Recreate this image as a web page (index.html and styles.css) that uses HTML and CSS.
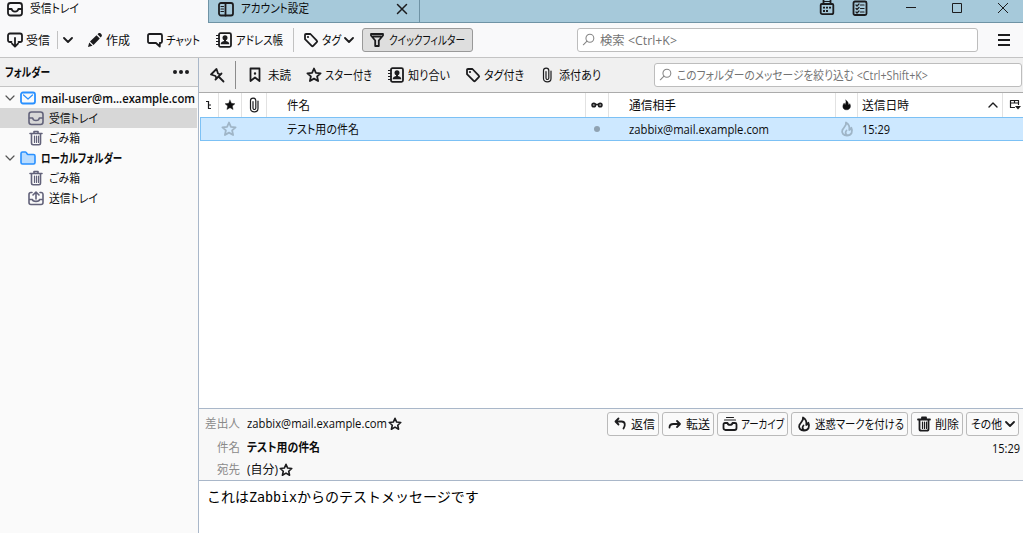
FILE: index.html
```
<!DOCTYPE html>
<html lang="ja">
<head>
  <meta charset="utf-8">
  <title>受信トレイ</title>
  <link rel="stylesheet" href="styles.css">
</head>
<body>
  <!-- shared icons -->
  <svg class="defs">
    <symbol id="inbox" viewBox="0 0 16 16"><rect x="1" y="2" width="14" height="12.5" rx="2.5"/><path d="M1.500 8h3.200c.4 3.400 6.200 3.400 6.600 0h3.200"/></symbol>
    <symbol id="star" viewBox="0 0 16 16"><path d="M8 1.500l1.900 4.300 4.700.5-3.500 3.100 1 4.600L8 11.600 3.900 14l1-4.600-3.500-3.100 4.700-.5z"/></symbol>
    <symbol id="tag" viewBox="0 0 16 16"><path d="M2 2.800v4.400l6.700 6.600c.5.500 1 .5 1.500 0l3.600-3.600c.5-.5.500-1 0-1.500L7.400 2H3c-.6 0-1 .3-1 .8z"/><circle class="solid" cx="5" cy="5" r="1.100"/></symbol>
    <symbol id="trash" viewBox="0 0 16 16"><path d="M2 3.500h12M6 3V1.500h4V3M3.500 4v9c0 1 .6 1.700 1.700 1.700h5.600c1.100 0 1.700-.7 1.700-1.700V4"/><path class="thin" d="M6.500 6v6.500M8.500 6v6.500M10.500 6v6.500"/></symbol>
    <symbol id="book" viewBox="0 0 16 16"><rect x="3" y="1.200" width="12" height="13.600" rx="1.500"/><path class="thin" d="M0 3.500h3M0 6.500h3M0 9.500h3M0 12.500h3"/><circle class="solid" cx="9" cy="5.800" r="2.500"/><path class="solid" d="M4.700 12.300c0-2.300 1.500-2.800 3.300-3.300V8h2v1c1.800.5 3.300 1 3.300 3.300z"/></symbol>
    <symbol id="clip" viewBox="0 0 16 16"><path d="M12 4v7.500c0 4.500-7.500 4.500-7.500 0v-8c0-3.200 5.300-3.200 5.300 0V11c0 2-2.800 2-2.800 0V4.500"/></symbol>
    <symbol id="flame" viewBox="0 0 16 16"><path d="M7 1.500c.8 3-2.200 4.500-3.600 7.500-1.200 3 1 5.500 4.600 5.500 4.500 0 6.300-4 4.300-7.800-.3 1.300-.9 2-2 2.300C10.800 6 9.800 3 7 1.500zM7.500 9.500c-1.300 1.500-1.300 3.300.3 4.500"/></symbol>
    <symbol id="flame-solid" viewBox="0 0 16 16"><path d="M7 1c1 3-.8 4.300-.5 6.300C5 7 4.700 6.300 4.800 5 1 9 2.500 15 8 15s7.200-5.500 4.700-9c-.4 1-1 1.500-1.900 1.600C11 4.500 9.500 2.500 7 1z"/></symbol>
    <symbol id="glass" viewBox="0 0 16 16"><circle cx="9" cy="6" r="4.500"/><path d="M5.700 9.300L1.500 13.500"/></symbol>
    <symbol id="down" viewBox="0 0 10 10"><path d="M1 3l4 4 4-4"/></symbol>
  </svg>

  <div class="tabs">
    <div class="tab active">
      <svg class="icon"><use href="#inbox"/></svg>
      <span class="t" data-w="49">受信トレイ</span>
    </div>
    <div class="tab second">
      <svg class="icon" viewBox="0 0 16 16"><rect x="1" y="2" width="14" height="12.500" rx="2"/><path d="M7.500 2v12.500"/><path class="thin" d="M3 5.500h2.500M3 8h2.500M3 10.500h2.500"/></svg>
      <span class="t" data-w="68">アカウント設定</span>
      <svg class="icon close" viewBox="0 0 16 16"><path d="M3.500 3.500l9 9M12.500 3.500l-9 9"/></svg>
    </div>
    <div class="window-icons">
      <svg class="icon cal" viewBox="0 0 16 16"><path d="M2.700 4h10.600c.7 0 1 .3 1 1v7.500c0 1-.7 1.700-1.700 1.700H3.400c-1 0-1.700-.7-1.700-1.700V5c0-.7.3-1 1-1z"/><path d="M4.500 0v3.500M11.500 0v3.500"/><path class="thin" d="M5 1.500h6"/><path class="dots" d="M4 7.700h8M4 11h5.500"/></svg>
      <svg class="icon tasks" viewBox="0 0 16 16"><rect x="1.500" y="1.500" width="13" height="13.500" rx="1.500"/><path class="thin" d="M4 5l1 1 2-2M4 8.500l1 1 2-2M4 12l1 1 2-2M8.500 5H12M8.500 8.500H12M8.500 12H12"/></svg>
      <svg class="icon win min" viewBox="0 0 16 16"><path d="M3 7.500h10"/></svg>
      <svg class="icon win max" viewBox="0 0 16 16"><path d="M3.500 3.500h9v9h-9z"/></svg>
      <svg class="icon win" viewBox="0 0 16 16"><path d="M3 3l10 10M13 3L3 13"/></svg>
    </div>
  </div>

  <div class="toolbar">
    <div class="tool receive">
      <svg class="icon" viewBox="0 0 16 16"><path d="M4.500 10H3c-1.200 0-2-.7-2-1.800V3.500C1 2.300 1.700 1.500 3 1.500h10c1.300 0 2 .8 2 2v4.700c0 1.100-.8 1.800-2 1.800h-1.500M8 6v8.500M5 11.700l3 3 3-3"/></svg>
      <span class="t" data-w="24">受信</span>
    </div>
    <div class="sep small"></div>
    <svg class="chev wide"><use href="#down"/></svg>
    <div class="tool write">
      <svg class="icon" viewBox="0 0 16 16"><path class="solid" d="M1 15l1.200-4.500 3.300 3.300zM3 9.500l6.500-6.300L12.800 6.500 6.500 13zM10.500 2.300l1-1c1.500-1.200 4.300 1.500 3.200 3l-1 1.200z"/></svg>
      <span class="t" data-w="24">作成</span>
    </div>
    <div class="tool chat">
      <svg class="icon" viewBox="0 0 16 16"><path d="M2.500 2h11c1 0 1.500.5 1.500 1.500v6c0 1-.5 1.500-1.500 1.500h-.7v3.500L9 11H2.500C1.500 11 1 10.500 1 9.500v-6C1 2.500 1.500 2 2.500 2z"/></svg>
      <span class="t" data-w="34">チャット</span>
    </div>
    <div class="tool address">
      <svg class="icon"><use href="#book"/></svg>
      <span class="t" data-w="47">アドレス帳</span>
    </div>
    <div class="sep"></div>
    <div class="tool tags">
      <svg class="icon"><use href="#tag"/></svg>
      <span class="t" data-w="19">タグ</span>
      <svg class="chev"><use href="#down"/></svg>
    </div>
    <div class="tool quick">
      <svg class="icon" viewBox="0 0 16 16"><path d="M2 2h12v1.500L9.800 8.500V14H6.200V8.500L2 3.500zM4 4.500h8"/></svg>
      <span class="t" data-w="76">クイックフィルター</span>
    </div>
    <div class="search">
      <svg class="glass"><use href="#glass"/></svg>
      <span class="t" data-w="77">検索 &lt;Ctrl+K&gt;</span>
    </div>
    <div class="menu"><i></i><i></i><i></i></div>
  </div>

  <div class="main">
    <div class="sidebar">
      <div class="side-head">
        <span class="t" data-w="45">フォルダー</span>
        <div class="more"><i></i><i></i><i></i></div>
      </div>
      <div class="row account">
        <svg class="chev"><use href="#down"/></svg>
        <svg class="icon blue" viewBox="0 0 16 16"><rect x="1" y="2.500" width="14" height="11" rx="2"/><path class="thin" d="M3.500 5L8 9l4.500-4"/></svg>
        <span class="t" data-w="154">mail-user@m...example.com</span>
      </div>
      <div class="row selected">
        <svg class="icon folder"><use href="#inbox"/></svg>
        <span class="t" data-w="49">受信トレイ</span>
      </div>
      <div class="row">
        <svg class="icon folder"><use href="#trash"/></svg>
        <span class="t" data-w="31">ごみ箱</span>
      </div>
      <div class="row account">
        <svg class="chev"><use href="#down"/></svg>
        <svg class="icon blue filled" viewBox="0 0 16 16"><path d="M1 12V3.500C1 2.500 1.500 2 2.500 2h3c1 0 1.500 2.500 2.500 2.500h5.500c1 0 1.500.5 1.500 1.500v6.500c0 1-.5 1.500-1.500 1.500h-11C1.500 14 1 13.500 1 12.500z"/></svg>
        <span class="t" data-w="81">ローカルフォルダー</span>
      </div>
      <div class="row">
        <svg class="icon folder"><use href="#trash"/></svg>
        <span class="t" data-w="31">ごみ箱</span>
      </div>
      <div class="row">
        <svg class="icon folder" viewBox="0 0 16 16"><path d="M4 2.500H3c-1.300 0-2 .7-2 2v8c0 1.300.7 2 2 2h10c1.300 0 2-.7 2-2v-8c0-1.300-.7-2-2-2h-1M1.500 9.500h3c0 2.500 7 2.500 7 0h3M8 9V2.500M5 5l3-3 3 3"/></svg>
        <span class="t" data-w="49">送信トレイ</span>
      </div>
    </div>

    <div class="content">
      <div class="filter">
        <svg class="icon pin" viewBox="0 0 16 16"><path d="M10 10l4.500 4.500M12.500 6.500l-6 6M11.500 7.500L9 6.500 7.500 2 2 7.500 6.500 9l1 2.500"/></svg>
        <div class="sep dark"></div>
        <div class="tool unread">
          <svg class="icon" viewBox="0 0 16 16"><path d="M3.500 1.500h9v12.500L8 10.500 3.500 14z"/><circle class="solid" cx="8" cy="6.500" r="1.200"/></svg>
          <span class="t" data-w="23">未読</span>
        </div>
        <div class="tool starred">
          <svg class="icon"><use href="#star"/></svg>
          <span class="t" data-w="47">スター付き</span>
        </div>
        <div class="tool known">
          <svg class="icon"><use href="#book"/></svg>
          <span class="t" data-w="42">知り合い</span>
        </div>
        <div class="tool tagged">
          <svg class="icon"><use href="#tag"/></svg>
          <span class="t" data-w="40">タグ付き</span>
        </div>
        <div class="tool attached">
          <svg class="icon light"><use href="#clip"/></svg>
          <span class="t" data-w="42">添付あり</span>
        </div>
        <div class="search">
          <svg class="glass"><use href="#glass"/></svg>
          <span class="t" data-w="251">このフォルダーのメッセージを絞り込む &lt;Ctrl+Shift+K&gt;</span>
        </div>
      </div>

      <div class="columns head">
        <div class="cell"><svg class="tiny" viewBox="0 0 10 10"><path d="M1 1.500h2M3.500 1v7.500H6M3.500 5H6"/></svg></div>
        <div class="cell center"><svg class="col-star black"><use href="#star"/></svg></div>
        <div class="cell center"><svg class="icon light"><use href="#clip"/></svg></div>
        <div class="cell subject"><span class="t" data-w="23">件名</span></div>
        <div class="cell center"><svg class="glasses" viewBox="0 0 12 8"><circle cx="2.800" cy="4" r="1.800"/><circle cx="9.200" cy="4" r="1.800"/><path d="M4.500 3.500h3"/></svg></div>
        <div class="cell person"><span class="t" data-w="47">通信相手</span></div>
        <div class="cell center"><svg class="col-flame black"><use href="#flame-solid"/></svg></div>
        <div class="cell date"><span class="t" data-w="47">送信日時</span><svg class="chev up"><use href="#down"/></svg></div>
        <div class="cell picker"><svg viewBox="0 0 12 12"><path d="M5.500 8.500H1.500v-7h8v4M1.500 4h8M5.500 1.500V4"/><path class="solid" d="M6 7h6L9 10.500z"/></svg></div>
      </div>
      <div class="columns message">
        <div class="cell"></div>
        <div class="cell center"><svg class="icon faded"><use href="#star"/></svg></div>
        <div class="cell"></div>
        <div class="cell subject"><span class="t" data-w="72">テスト用の件名</span></div>
        <div class="cell center"><i class="dot"></i></div>
        <div class="cell person"><span class="t" data-w="140">zabbix@mail.example.com</span></div>
        <div class="cell center"><svg class="icon faded"><use href="#flame"/></svg></div>
        <div class="cell date"><span class="t" data-w="28">15:29</span></div>
        <div class="cell"></div>
      </div>
      <div class="empty"></div>

      <div class="msg-head">
        <div class="fields">
          <div class="field from"><span class="name"><span class="t" data-w="35">差出人</span></span><span class="t" data-w="140">zabbix@mail.example.com</span><svg class="mini-star"><use href="#star"/></svg></div>
          <div class="field"><span class="name"><span class="t" data-w="23">件名</span></span><b class="t" data-w="73">テスト用の件名</b></div>
          <div class="field to"><span class="name"><span class="t" data-w="23">宛先</span></span><span class="t" data-w="31">(自分)</span><svg class="mini-star"><use href="#star"/></svg></div>
        </div>
        <div class="side">
          <div class="actions">
            <button class="reply"><svg class="icon" viewBox="0 0 16 16"><path d="M6.500 2.500L3.500 5.500l3 3M4 5.500h5.500c4 0 4 4 2 7"/></svg><span class="t" data-w="24">返信</span></button>
            <button class="forward"><svg class="icon" viewBox="0 0 16 16"><path d="M2.500 11.500c0-2.500 1.500-3.500 4-3.500H13M10 5l3 3-3 3"/></svg><span class="t" data-w="24">転送</span></button>
            <button class="archive"><svg class="icon" viewBox="0 0 16 16"><path class="thin" d="M4.500 1.500h7M2.500 4h11"/><path d="M3 7h2.500c.5 2.500 4.500 2.500 5 0H13c1 0 1.500.5 1.500 1.500V12c0 1.200-.8 2-2 2h-9c-1.200 0-2-.8-2-2V8.500C1.500 7.500 2 7 3 7z"/></svg><span class="t" data-w="43">アーカイブ</span></button>
            <button class="junk"><svg class="icon"><use href="#flame"/></svg><span class="t" data-w="89">迷惑マークを付ける</span></button>
            <button class="delete"><svg class="icon"><use href="#trash"/></svg><span class="t" data-w="24">削除</span></button>
            <button class="other"><span class="t" data-w="31">その他</span><svg class="chev"><use href="#down"/></svg></button>
          </div>
          <div class="time"><span class="t" data-w="28">15:29</span></div>
        </div>
      </div>
      <div class="msg-body">これは<span>Zabbix</span>からのテストメッセージです</div>
    </div>
  </div>

  <script>
    const labels = document.querySelectorAll(".t");

    labels.forEach((label) => {
      const width = Number(label.dataset.w);
      const natural = label.getBoundingClientRect().width;
      label.style.width = `${width}px`;
      label.style.transform = `scaleX(${width / natural})`;
    });
  </script>
</body>
</html>
```
FILE: styles.css
```
* {
  box-sizing: border-box;
}

body {
  margin: 0;
  width: 1023px;
  height: 533px;
  overflow: hidden;
  display: flex;
  flex-direction: column;
  font: 12px/16px "Open Sans", "Noto Sans CJK JP", sans-serif;
  font-feature-settings: "palt";
  color: #0c0c0d;
  background: #fff;
}

.defs {
  display: none;
}

svg {
  flex: none;
  fill: none;
  stroke: #1c1c1e;
  stroke-width: 1.8;
  stroke-linejoin: round;
  stroke-linecap: round;
}

.solid {
  fill: #1c1c1e;
  stroke: none;
}

.thin {
  stroke-width: 1.2;
}

.t {
  display: inline-block;
  flex: none;
  padding-top: 2px;
  white-space: nowrap;
  transform-origin: 0 50%;
}

.icon {
  width: 16px;
  height: 16px;
}

.light {
  stroke-width: 1.2;
}

.chev {
  width: 10px;
  height: 10px;
}

/* tabs */
.tabs {
  height: 23px;
  display: flex;
  background: #a6c9da;
  border-bottom: 1px solid #6f93a5;
}

.tab {
  display: flex;
  height: 22px;
  padding-bottom: 5px;
  align-items: center;
}

.tab .t {
  padding-top: 1px;
}

.tab.active {
  width: 208px;
  height: 23px;
  padding: 0 0 6px 7px;
  gap: 7px;
  background: #f9f9fa;
}

.tab.second {
  width: 212px;
  padding-left: 9px;
  gap: 7px;
  border-left: 1px solid #6f93a5;
  border-right: 1px solid #6f93a5;
}

.close {
  margin-left: 78px;
  stroke-width: 1.5;
}

.window-icons {
  display: flex;
  flex: 1;
  padding-left: 399px;
}

.tasks {
  margin-left: 17px;
}

.dots {
  stroke-dasharray: 2 1;
  stroke-linecap: butt;
}

.win {
  stroke-width: 1;
  stroke-linecap: butt;
  margin-left: 30px;
}

.win.min {
  margin-left: 35px;
}

/* toolbar */
.toolbar {
  height: 35px;
  display: flex;
  align-items: center;
  background: #f9f9fa;
  border-bottom: 1px solid #c4c4c4;
}

.tool {
  display: flex;
  align-items: center;
  gap: 3px;
  flex: none;
}

.receive {
  width: 57px;
  padding-left: 7px;
}

.sep {
  width: 1px;
  height: 24px;
  background: #c2c2c2;
}

.sep.small {
  height: 18px;
}

.chev.wide {
  margin-left: 5px;
}

.write {
  width: 60px;
  margin-left: 14px;
}

.chat {
  width: 69px;
}

.address {
  width: 77px;
  gap: 4px;
}

.tags {
  width: 68px;
  padding-left: 9px;
  gap: 3px;
}

.quick {
  width: 111px;
  height: 24px;
  padding-left: 6px;
  gap: 4px;
  border: 1px solid #999;
  border-radius: 3px;
  background: #dedede;
}

.search {
  display: flex;
  align-items: center;
  width: 401px;
  height: 24px;
  margin-left: 104px;
  padding-left: 4px;
  gap: 4px;
  border: 1px solid #bdbdbd;
  border-radius: 3px;
  background: #fff;
  color: #737373;
}

.glass {
  width: 14px;
  height: 14px;
  stroke: #858585;
  stroke-width: 1.2;
}

.menu {
  display: flex;
  flex-direction: column;
  gap: 3px;
  margin-left: 20px;
}

.menu i {
  width: 12px;
  height: 2px;
  background: #1c1c1e;
}

/* folder pane */
.main {
  flex: 1;
  display: flex;
}

.sidebar {
  width: 199px;
  background: #fafafa;
  border-right: 1px solid #a9b7c9;
}

.side-head {
  display: flex;
  align-items: center;
  justify-content: space-between;
  height: 29px;
  padding: 0 9px 0 5px;
  margin-bottom: 1px;
  background: #f0f0f0;
  border-bottom: 1px solid #c4c4c4;
  font-weight: 600;
}

.more {
  display: flex;
  gap: 2px;
}

.more i {
  width: 4px;
  height: 4px;
  border-radius: 50%;
  background: #1c1c1e;
}

.row {
  display: flex;
  align-items: center;
  gap: 5px;
  width: 197px;
  height: 20px;
  padding-left: 28px;
}

.account {
  padding-left: 5px;
  font-weight: 600;
}

.account .chev {
  stroke: #555;
  stroke-width: 1.2;
}

.selected {
  background: #d7d7d7;
}

.row .blue {
  stroke: #2990ff;
}

.row .filled {
  fill: #b9dcff;
  stroke-width: 1.6;
}

.folder {
  stroke: #62627a;
  stroke-width: 1.6;
}

/* quick filter bar */
.content {
  flex: 1;
  min-width: 0;
  display: flex;
  flex-direction: column;
}

.filter {
  display: flex;
  align-items: center;
  height: 35px;
  background: #f0f0f0;
  border-bottom: 1px solid #ababab;
}

.pin {
  margin-left: 10px;
}

.sep.dark {
  height: 28px;
  margin-left: 10px;
  background: #8c8c8c;
}

.unread {
  width: 70px;
  padding-left: 11px;
  gap: 5px;
}

.starred {
  width: 82px;
}

.known {
  width: 77px;
  gap: 4px;
}

.tagged {
  width: 74px;
}

.attached {
  width: 114px;
  gap: 4px;
}

.filter .search {
  width: 368px;
  height: 24px;
  margin-left: 1px;
}

/* message list */
.columns {
  display: grid;
  grid-template-columns: 20px 23px 25px 319px 23px 227px 22px 145px 20px;
}

.head {
  height: 24px;
}

.cell {
  display: flex;
  align-items: center;
  min-width: 0;
}

.center {
  justify-content: center;
}

.head .cell {
  border-right: 1px solid #e2e2e2;
}

.head .picker {
  border-right: none;
  padding-left: 6px;
}

.picker svg {
  width: 12px;
  height: 12px;
  stroke-width: 1.2;
}

.tiny {
  width: 10px;
  height: 10px;
  margin-left: 6px;
  stroke-width: 1.2;
  stroke-linecap: butt;
}

.col-star {
  width: 12px;
  height: 12px;
}

.col-flame {
  width: 11px;
  height: 12px;
}

.black {
  fill: #0c0c0d;
  stroke-width: 0.6;
}

.subject {
  padding-left: 20px;
}

.person {
  padding-left: 20px;
}

.date {
  padding-left: 4px;
}

.glasses {
  width: 12px;
  height: 8px;
  fill: #888;
  stroke-width: 1.5;
}

.up {
  margin-left: 79px;
  transform: rotate(180deg);
  stroke-width: 1.4;
}

.message {
  height: 24px;
  margin-left: 1px;
  grid-template-columns: 18px 23px 25px 320px 23px 227px 22px 145px 19px;
  background: #cde8ff;
  border: 1px solid #7cc1f5;
  border-right: none;
}

.message .subject {
  padding-left: 20px;
}

.message .center {
  padding-right: 3px;
}

.message .person {
  padding-left: 19px;
}

.message .date {
  padding-left: 3px;
}

.faded {
  stroke: #9fb5c7;
  stroke-width: 1.8;
}

.dot {
  width: 6px;
  height: 6px;
  border-radius: 50%;
  background: #8fa2b2;
}

.empty {
  flex: 1;
}

/* message header */
.msg-head {
  display: flex;
  justify-content: space-between;
  height: 73px;
  background: #f8f8f8;
  border-top: 1px solid #a9b7c9;
  border-bottom: 1px solid #a9b7c9;
}

.field {
  display: flex;
  align-items: center;
  height: 22px;
}

.field .t,
.time .t {
  padding-top: 0;
}

.field.from {
  height: 28px;
  padding-top: 2px;
}

.name {
  width: 41px;
  margin-right: 7px;
  text-align: right;
  color: #8a8a8a;
}

.mini-star {
  width: 14px;
  height: 14px;
  margin-left: 1px;
}

.actions {
  display: flex;
  gap: 3px;
  padding: 3px 4px 0 0;
}

button {
  display: flex;
  align-items: center;
  height: 24px;
  padding: 0 0 0 4px;
  gap: 3px;
  border: 1px solid #bababa;
  border-radius: 3px;
  background: #fafafa;
  color: #0c0c0d;
  font: inherit;
  font-feature-settings: inherit;
}

.reply,
.forward,
.delete {
  width: 52px;
}

.archive {
  width: 71px;
}

.junk {
  width: 117px;
}

.other {
  width: 53px;
}

.time {
  display: flex;
  justify-content: flex-end;
  padding: 5px 3px 0 0;
}

.msg-body {
  height: 52px;
  padding: 7px 0 0 8px;
  font: 14px/16px "Noto Sans CJK JP", monospace;
  font-feature-settings: normal;
  color: #000;
}

.msg-body span {
  font: 13.3px/16px "DejaVu Sans Mono", monospace;
}
```
